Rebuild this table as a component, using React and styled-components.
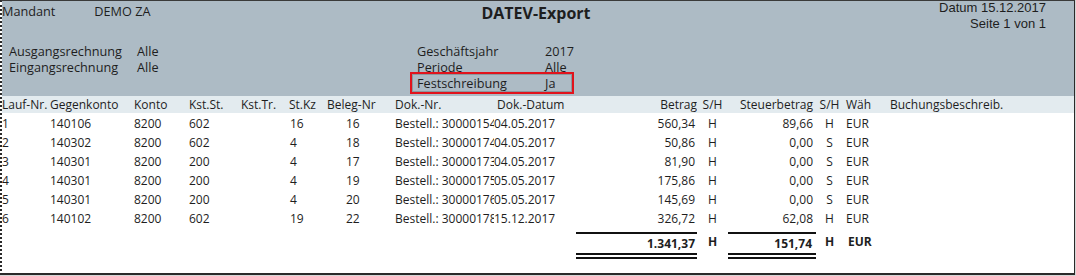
import React from 'react';
import styled, { createGlobalStyle } from 'styled-components';

const GlobalStyle = createGlobalStyle`
  html, body {
    margin: 0;
    padding: 0;
    background: #d6d6d6;
  }
  body {
    font-family: "Open Sans", "Noto Sans", sans-serif;
    color: #1e1e1e;
  }
`;

const rows = [
    {lauf: '1', gegen: '140106', konto: '8200', kst: '602', stkz: '16', beleg: '16', dok: 'Bestell.: 30000154', datum: '04.05.2017', betrag: '560,34', sh: 'H', steuer: '89,66', ssh: 'H', wah: 'EUR'},
    {lauf: '2', gegen: '140302', konto: '8200', kst: '602', stkz: '4', beleg: '18', dok: 'Bestell.: 30000174', datum: '04.05.2017', betrag: '50,86', sh: 'H', steuer: '0,00', ssh: 'S', wah: 'EUR'},
    {lauf: '3', gegen: '140301', konto: '8200', kst: '200', stkz: '4', beleg: '17', dok: 'Bestell.: 30000173', datum: '04.05.2017', betrag: '81,90', sh: 'H', steuer: '0,00', ssh: 'S', wah: 'EUR'},
    {lauf: '4', gegen: '140301', konto: '8200', kst: '200', stkz: '4', beleg: '19', dok: 'Bestell.: 30000175', datum: '05.05.2017', betrag: '175,86', sh: 'H', steuer: '0,00', ssh: 'S', wah: 'EUR'},
    {lauf: '5', gegen: '140301', konto: '8200', kst: '200', stkz: '4', beleg: '20', dok: 'Bestell.: 30000176', datum: '05.05.2017', betrag: '145,69', sh: 'H', steuer: '0,00', ssh: 'S', wah: 'EUR'},
    {lauf: '6', gegen: '140102', konto: '8200', kst: '602', stkz: '19', beleg: '22', dok: 'Bestell.: 30000178', datum: '15.12.2017', betrag: '326,72', sh: 'H', steuer: '62,08', ssh: 'H', wah: 'EUR'},
];

const App = () => {
    return (
        <>
            <GlobalStyle/>
            <Frame>
                <Header>
                    <TopRow>
                        <Mandant>
                            <span>Mandant</span>
                            <MandantValue>DEMO ZA</MandantValue>
                        </Mandant>
                        <Title>DATEV-Export</Title>
                        <PageInfo>
                            <div>Datum 15.12.2017</div>
                            <div>Seite 1 von 1</div>
                        </PageInfo>
                    </TopRow>
                    <InfoArea>
                        <InfoGroup $width="401px">
                            <InfoRow><span>Ausgangsrechnung</span><span>Alle</span></InfoRow>
                            <InfoRow><span>Eingangsrechnung</span><span>Alle</span></InfoRow>
                        </InfoGroup>
                        <InfoGroup $width="164px">
                            <InfoRow $pad="7px"><span>Geschäftsjahr</span><span>2017</span></InfoRow>
                            <InfoRow $pad="7px"><span>Periode</span><span>Alle</span></InfoRow>
                            <Highlight><span>Festschreibung</span><span>Ja</span></Highlight>
                        </InfoGroup>
                    </InfoArea>
                </Header>

                <HeadRow>
                    <Cell>Lauf-Nr.</Cell>
                    <Cell>Gegenkonto</Cell>
                    <Cell>Konto</Cell>
                    <Cell>Kst.St.</Cell>
                    <Cell>Kst.Tr.</Cell>
                    <Cell>St.Kz</Cell>
                    <Cell>Beleg-Nr</Cell>
                    <Cell>Dok.-Nr.</Cell>
                    <Cell $pl="3px">Dok.-Datum</Cell>
                    <Cell $align="right">Betrag</Cell>
                    <Cell $align="center">S/H</Cell>
                    <Cell $align="right" $pr="3px">Steuerbetrag</Cell>
                    <Cell $align="center">S/H</Cell>
                    <Cell $pl="3px">Wäh</Cell>
                    <Cell $pl="2px">Buchungsbeschreib.</Cell>
                </HeadRow>

                <Body>
                    {rows.map((r, i) =>
                        <DataRow key={i}>
                            <Cell>{r.lauf}</Cell>
                            <Cell>{r.gegen}</Cell>
                            <Cell>{r.konto}</Cell>
                            <Cell>{r.kst}</Cell>
                            <Cell/>
                            <Cell $pl="1px">{r.stkz}</Cell>
                            <Cell $pl="19px">{r.beleg}</Cell>
                            <Cell>{r.dok}</Cell>
                            <Cell>{r.datum}</Cell>
                            <Cell $align="right" $pr="2px">{r.betrag}</Cell>
                            <Cell $align="center">{r.sh}</Cell>
                            <Cell $align="right" $pr="3px">{r.steuer}</Cell>
                            <Cell $align="center">{r.ssh}</Cell>
                            <Cell $pl="3px">{r.wah}</Cell>
                            <Cell/>
                        </DataRow>
                    )}
                    <TotalRow>
                        <Cell/><Cell/><Cell/><Cell/><Cell/><Cell/><Cell/><Cell/><Cell/>
                        <SumCell $pr="2px">1.341,37</SumCell>
                        <Cell $align="center">H</Cell>
                        <SumCell $pr="4px">151,74</SumCell>
                        <Cell $align="center">H</Cell>
                        <Cell $pl="5px">EUR</Cell>
                        <Cell/>
                    </TotalRow>
                </Body>
            </Frame>
        </>
    )
}

const Frame = styled.div`
  box-sizing: border-box;
  width: 1075px;
  height: 275px;
  background: #fff;
  border-top: 1px solid #3a3a3a;
  border-left: 2px dotted #2a2a2a;
  border-right: 1px solid #2a2a2a;
  border-bottom: 2px solid #2a2a2a;
  overflow: hidden;
`;

const Header = styled.div`
  height: 95px;
  background: #adbbc5;
  display: flex;
  flex-direction: column;
`;

const TopRow = styled.div`
  display: grid;
  grid-template-columns: 1fr auto 1fr;
  height: 31px;
`;

const Mandant = styled.div`
  display: flex;
  font-size: 12.7px;
  line-height: 16px;
  padding-top: 2px;
`;

const MandantValue = styled.span`
  margin-left: 39px;
`;

const Title = styled.div`
  font-weight: 700;
  font-size: 16px;
  line-height: 20px;
  padding-top: 2px;
  margin-left: -4px;
`;

const PageInfo = styled.div`
  font-family: "Liberation Sans", Arial, sans-serif;
  font-size: 13px;
  line-height: 16px;
  text-align: right;
  margin-top: -1px;
  padding-right: 28px;
`;

const InfoArea = styled.div`
  display: flex;
  padding-top: 11px;
  font-size: 12.7px;
  line-height: 16px;
`;

const InfoGroup = styled.div`
  width: ${p => p.$width};
  display: flex;
  flex-direction: column;
  &:first-child {
    margin-left: 7px;
  }
`;

const InfoRow = styled.div`
  display: grid;
  grid-template-columns: 128px 1fr;
  padding-left: ${p => p.$pad || '0'};
`;

const Highlight = styled.div`
  display: grid;
  grid-template-columns: 128px 1fr;
  margin-top: -3px;
  border: 2px solid #e1131c;
  box-shadow: inset 0 0 0 1px #8d979e;
  padding: 1px 1px 1px 5px;
`;

const columns = '48px 84px 55px 52px 48px 38px 68px 99px 82px 121px 31px 88px 27px 45px 1fr';

const HeadRow = styled.div`
  display: grid;
  grid-template-columns: ${columns};
  height: 17px;
  align-items: center;
  background: #e3ebef;
  font-size: 12px;
  line-height: 17px;
`;

const Body = styled.div`
  padding-top: 1px;
  font-size: 12px;
`;

const DataRow = styled.div`
  display: grid;
  grid-template-columns: ${columns};
  height: 19px;
  line-height: 19px;
`;

const Cell = styled.div`
  white-space: nowrap;
  overflow: hidden;
  text-align: ${p => p.$align || 'left'};
  padding-left: ${p => p.$pl || '0'};
  padding-right: ${p => p.$pr || '0'};
`;

const TotalRow = styled.div`
  display: grid;
  grid-template-columns: ${columns};
  margin-top: 4px;
  height: 23px;
  line-height: 19px;
  font-weight: 700;
`;

const SumCell = styled.div`
  white-space: nowrap;
  text-align: right;
  padding-right: ${p => p.$pr || '0'};
  border-top: 2px solid #111;
  border-bottom: 6px double #111;
`;

export default App;
